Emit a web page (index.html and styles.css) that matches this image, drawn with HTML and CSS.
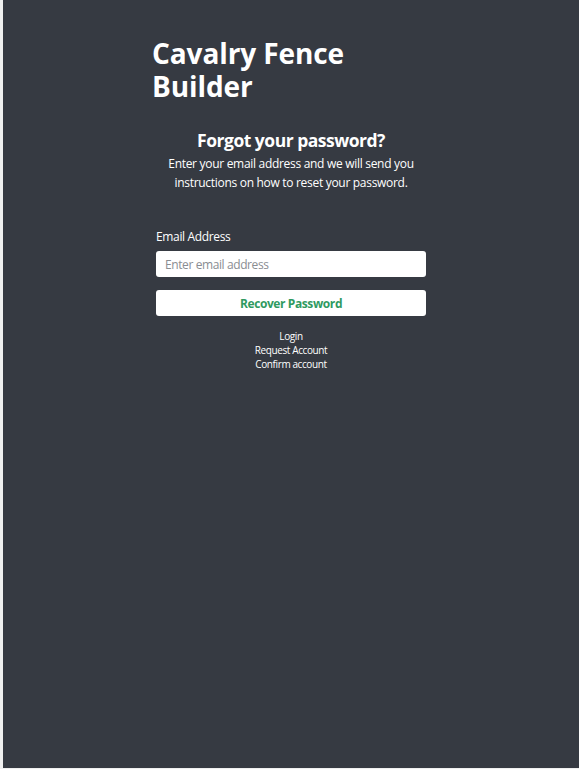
FILE: index.html
```html
<!DOCTYPE html>
<html lang="en">
<head>
<meta charset="utf-8">
<title>Cavalry Fence Builder - Forgot password</title>
<link rel="stylesheet" href="styles.css">
</head>
<body>
<main class="page">
  <div class="column">
    <h1 class="brand">Cavalry Fence<br>Builder</h1>
    <section class="intro">
      <h2 class="intro-title">Forgot your password?</h2>
      <p class="intro-text">Enter your email address and we will send you instructions on how to reset your password.</p>
    </section>
    <form class="form">
      <label class="label" for="email">Email Address</label>
      <input class="input" id="email" type="email" placeholder="Enter email address">
      <button class="button" type="button">Recover Password</button>
    </form>
    <nav class="links">
      <a href="#">Login</a>
      <a href="#">Request Account</a>
      <a href="#">Confirm account</a>
    </nav>
  </div>
</main>
</body>
</html>
```
FILE: styles.css
```css
html, body {
  margin: 0;
  padding: 0;
}
body {
  background: #f0f0f0;
  font-family: "Open Sans", "Noto Sans", sans-serif;
  color: #fff;
}
.page {
  margin-left: 3px;
  height: 768px;
  background: #363a42;
  display: flex;
  justify-content: center;
}
.column {
  width: 278px;
  padding-top: 37px;
  display: flex;
  flex-direction: column;
}
.brand {
  margin: 0;
  font-size: 28px;
  line-height: 33px;
  font-weight: 700;
  letter-spacing: -0.1px;
}
.intro {
  margin-top: 24px;
  text-align: center;
}
.intro-title {
  margin: 0;
  font-size: 17.5px;
  line-height: 26px;
  font-weight: 700;
  letter-spacing: -0.5px;
}
.intro-text {
  margin: 1px 0 0;
  font-size: 12px;
  line-height: 19px;
  letter-spacing: -0.3px;
}
.form {
  margin: 37px 4px 0;
  display: flex;
  flex-direction: column;
}
.label {
  font-size: 12px;
  line-height: 16px;
  letter-spacing: -0.35px;
}
.input {
  margin-top: 6px;
  height: 26px;
  box-sizing: border-box;
  border: 0;
  border-radius: 3px;
  background: #fff;
  padding: 0 9px;
  font-family: inherit;
  font-size: 12px;
  letter-spacing: -0.4px;
  color: #333;
}
.input::placeholder {
  color: #8a8d92;
}
.button {
  margin-top: 13px;
  height: 26px;
  border: 0;
  border-radius: 3px;
  background: #fff;
  color: #2f9a5f;
  font-family: inherit;
  font-size: 12px;
  font-weight: 700;
  letter-spacing: -0.4px;
}
.links {
  margin-top: 13px;
  display: flex;
  flex-direction: column;
  align-items: center;
}
.links a {
  color: #fff;
  text-decoration: none;
  font-size: 10px;
  line-height: 14px;
  letter-spacing: -0.4px;
}
```
